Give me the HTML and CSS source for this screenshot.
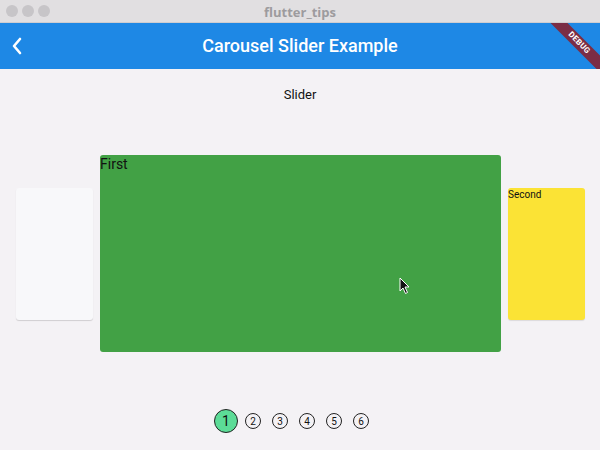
FILE: index.html
```html
<!DOCTYPE html>
<html>
<head>
<meta charset="utf-8">
<link rel="stylesheet" href="styles.css">
</head>
<body>
<div class="window">
  <div class="titlebar">
    <div class="lights"><span class="light"></span><span class="light"></span><span class="light"></span></div>
    <div class="wintitle">flutter_tips</div>
  </div>
  <div class="appbar">
    <svg class="back" width="12" height="18" viewBox="0 0 12 18"><path d="M9 2 L3 9 L9 16" fill="none" stroke="#fff" stroke-width="2.6" stroke-linecap="round" stroke-linejoin="round"/></svg>
    <div class="apptitle">Carousel Slider Example</div>
    <div class="debug">DEBUG</div>
  </div>
  <div class="body">
    <div class="label">Slider</div>
    <div class="carousel">
      <div class="card side white"></div>
      <div class="card main green"><span class="first">First</span>
        <svg class="cursor" width="12" height="18" viewBox="0 0 12 18"><path d="M1 1 L1 14 L4 11 L6.5 16.5 L8.5 15.5 L6 10 L10 10 Z" fill="#111" stroke="#fff" stroke-width="1"/></svg>
      </div>
      <div class="card side yellow"><span class="second">Second</span></div>
    </div>
    <div class="dots">
      <span class="dot active">1</span>
      <span class="dot">2</span>
      <span class="dot">3</span>
      <span class="dot">4</span>
      <span class="dot">5</span>
      <span class="dot">6</span>
    </div>
  </div>
</div>
</body>
</html>
```
FILE: styles.css
```css
* { box-sizing: border-box; }
html, body { margin: 0; padding: 0; }
body { width: 600px; height: 450px; overflow: hidden; font-family: Roboto, "Liberation Sans", sans-serif; background: #f4f2f5; }
.window { width: 600px; height: 450px; display: flex; flex-direction: column; }
.titlebar { height: 23px; background: #e1dfe1; border-bottom: 1px solid #cfcdd0; display: flex; align-items: center; position: relative; }
.lights { display: flex; gap: 4px; padding-left: 6px; }
.light { width: 12px; height: 12px; border-radius: 50%; background: #c7c5c8; }
.wintitle { position: absolute; left: 0; right: 0; top: 3px; text-align: center; font-size: 13px; font-weight: bold; color: #9d9b9e; font-family: "Open Sans", "Liberation Sans", sans-serif; }
.appbar { height: 46px; background: #1e88e5; display: flex; align-items: center; position: relative; overflow: hidden; }
.back { margin-left: 11px; }
.apptitle { position: absolute; left: 0; right: 0; text-align: center; color: #fff; font-size: 18px; font-weight: 500; top: 12px; }
.debug { position: absolute; right: -24px; top: 14px; width: 90px; height: 12px; background: #7b2d45; color: #fff; font-size: 8px; font-weight: bold; text-align: center; line-height: 12px; transform: rotate(45deg); letter-spacing: 0.3px; }
.body { flex: 1; display: flex; flex-direction: column; align-items: center; }
.label { margin-top: 18px; font-size: 13px; color: #111; height: 15px; }
.carousel { margin-top: 53px; width: 600px; height: 197px; display: flex; align-items: center; gap: 7px; padding-left: 16px; }
.card { border-radius: 3px; position: relative; }
.side { width: 77px; height: 132px; }
.white { background: #f8f8fa; box-shadow: 0 1px 1px rgba(0,0,0,0.15); }
.yellow { background: #fbe335; box-shadow: 0 1px 1px rgba(0,0,0,0.1); }
.main { width: 401px; height: 197px; background: #42a145; }
.first { position: absolute; left: 0; top: 1px; font-size: 14px; color: #111; }
.second { position: absolute; left: 0; top: 1px; font-size: 10px; color: #111; }
.cursor { position: absolute; left: 299px; top: 122px; }
.dots { margin-top: 57px; display: flex; align-items: center; gap: 11px; padding-right: 17px; }
.dot { width: 16px; height: 16px; border-radius: 50%; border: 1px solid #222; font-size: 10px; display: flex; align-items: center; justify-content: center; color: #111; }
.dot.active { width: 24px; height: 24px; background: #5cdc97; font-size: 14px; margin-right: -4px; }
```
